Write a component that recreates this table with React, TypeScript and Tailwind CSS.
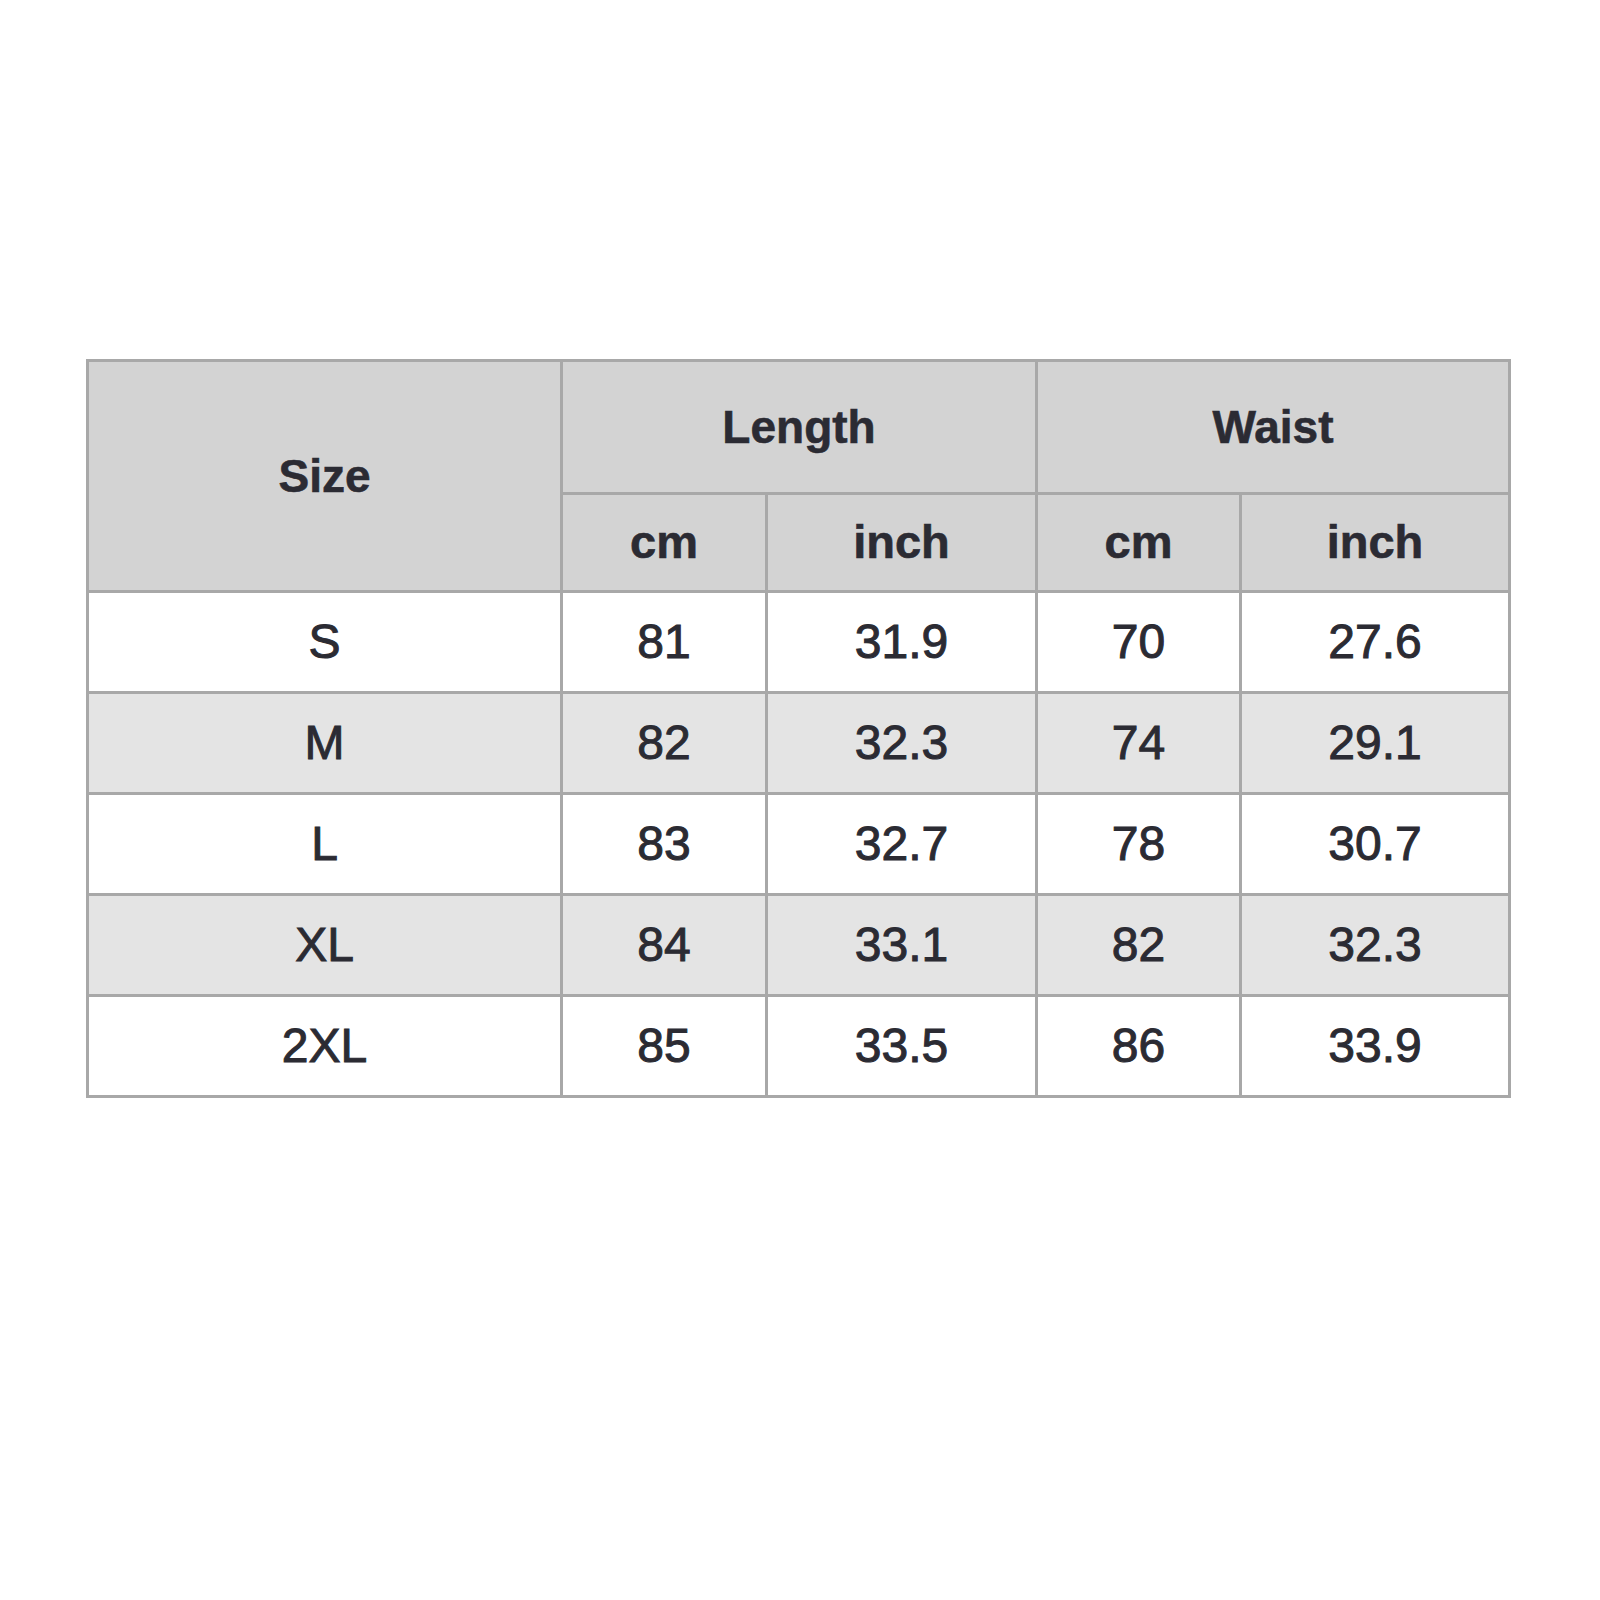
import React from "react";

const rows: [string, string, string, string, string][] = [
  ["S", "81", "31.9", "70", "27.6"],
  ["M", "82", "32.3", "74", "29.1"],
  ["L", "83", "32.7", "78", "30.7"],
  ["XL", "84", "33.1", "82", "32.3"],
  ["2XL", "85", "33.5", "86", "33.9"],
];

export default function App() {
  const font = { fontFamily: '"Liberation Sans", Arial, sans-serif' };
  return (
    <div className="w-[1600px] h-[1600px] bg-white" style={font}>
      <div className="pt-[359px] pl-[86px]">
        <table className="table-fixed border-collapse w-[1422px] text-[#2b2b33]">
          <colgroup>
            <col className="w-[474px]" />
            <col className="w-[205px]" />
            <col className="w-[270px]" />
            <col className="w-[204px]" />
            <col className="w-[269px]" />
          </colgroup>
          <thead>
            <tr className="h-[133px] bg-[#d3d3d3]">
              <th rowSpan={2} className="border-[3px] border-[#a8a8a8] text-[46px] font-bold text-center align-middle [-webkit-text-stroke:0.6px_#2b2b33]">
                Size
              </th>
              <th colSpan={2} className="border-[3px] border-[#a8a8a8] text-[46px] font-bold text-center [-webkit-text-stroke:0.6px_#2b2b33]">
                Length
              </th>
              <th colSpan={2} className="border-[3px] border-[#a8a8a8] text-[46px] font-bold text-center [-webkit-text-stroke:0.6px_#2b2b33]">
                Waist
              </th>
            </tr>
            <tr className="h-[98px] bg-[#d3d3d3]">
              <th className="border-[3px] border-[#a8a8a8] text-[47px] font-bold [-webkit-text-stroke:0.6px_#2b2b33]">cm</th>
              <th className="border-[3px] border-[#a8a8a8] text-[47px] font-bold [-webkit-text-stroke:0.6px_#2b2b33]">inch</th>
              <th className="border-[3px] border-[#a8a8a8] text-[47px] font-bold [-webkit-text-stroke:0.6px_#2b2b33]">cm</th>
              <th className="border-[3px] border-[#a8a8a8] text-[47px] font-bold [-webkit-text-stroke:0.6px_#2b2b33]">inch</th>
            </tr>
          </thead>
          <tbody>
            {rows.map((r, i) => (
              <tr key={r[0]} className={i % 2 === 1 ? "h-[101px] bg-[#e4e4e4]" : "h-[101px] bg-white"}>
                {r.map((c, j) => (
                  <td key={j} className="border-[3px] border-[#a8a8a8] text-center text-[48px] [-webkit-text-stroke:1px_#2b2b33]">
                    {c}
                  </td>
                ))}
              </tr>
            ))}
          </tbody>
        </table>
      </div>
    </div>
  );
}
